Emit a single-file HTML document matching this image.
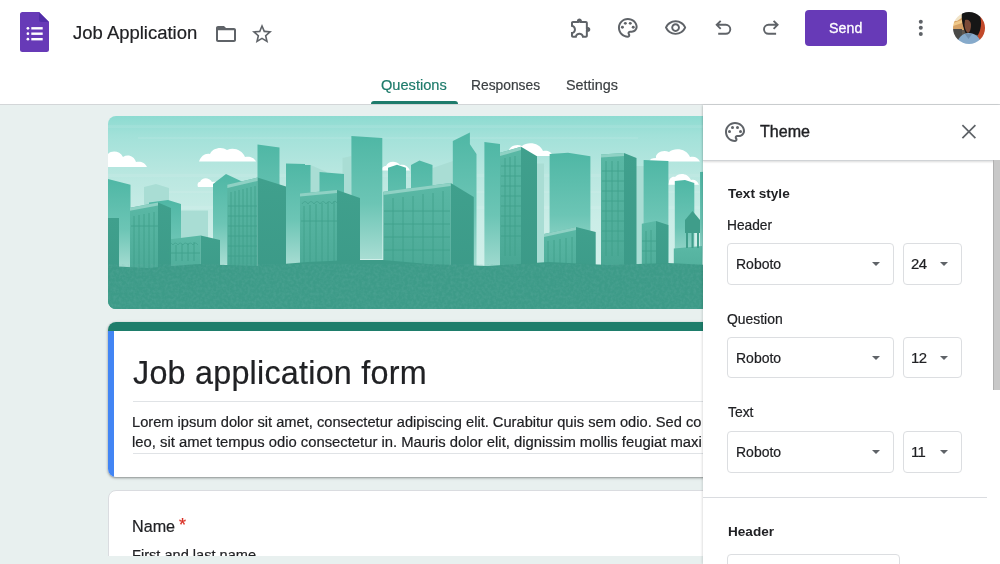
<!DOCTYPE html>
<html><head><meta charset="utf-8">
<style>
*{box-sizing:border-box;margin:0;padding:0}
html,body{width:1000px;height:564px;overflow:hidden;background:#e8f0ef;font-family:"Liberation Sans",sans-serif;color:#202124}
.a{position:absolute}
.t{position:absolute;white-space:nowrap;line-height:1;-webkit-text-stroke:0.2px currentColor;will-change:transform}
.ic{position:absolute;fill:#5f6368}
.dd{position:absolute;border:1px solid #dcdee1;border-radius:4px;background:#fff}
.arr{position:absolute;width:0;height:0;border-left:4px solid transparent;border-right:4px solid transparent;border-top:4px solid #5f6368}
</style></head>
<body>
<!-- top bar -->
<div class="a" style="left:0;top:0;width:1000px;height:105px;background:#fff;border-bottom:1px solid #d3d6d8"></div>
<svg class="a" style="left:20px;top:12px" width="29" height="40" viewBox="0 0 29 40">
  <path d="M2.5 0H19L29 10V37.5A2.5 2.5 0 0 1 26.5 40H2.5A2.5 2.5 0 0 1 0 37.5V2.5A2.5 2.5 0 0 1 2.5 0Z" fill="#673ab7"/>
  <path d="M19 0L29 10H21A2 2 0 0 1 19 8Z" fill="#512da8"/>
  <circle cx="7.9" cy="16.3" r="1.35" fill="#fff"/><circle cx="7.9" cy="21.7" r="1.35" fill="#fff"/><circle cx="7.9" cy="27.2" r="1.35" fill="#fff"/>
  <rect x="11.3" y="15.1" width="11.4" height="2.4" fill="#fff"/><rect x="11.3" y="20.5" width="11.4" height="2.4" fill="#fff"/><rect x="11.3" y="26" width="11.4" height="2.4" fill="#fff"/>
</svg>
<div class="t" style="left:72.8px;top:23.5px;font-size:18.48px;color:#202124">Job Application</div>
<!-- folder -->
<svg class="ic" style="left:214.2px;top:21.8px" width="24" height="24" viewBox="0 0 24 24"><path fill-rule="evenodd" d="M10 4H4c-1.1 0-1.99.9-1.99 2L2 18c0 1.1.9 2 2 2h16c1.1 0 2-.9 2-2V8c0-1.1-.9-2-2-2h-8l-2-2zM4 8.2h16v9.8H4z"/></svg>
<!-- star -->
<svg class="ic" style="left:250.2px;top:21.9px" width="24" height="24" viewBox="0 0 24 24"><path d="M22 9.24l-7.19-.62L12 2 9.19 8.63 2 9.24l5.46 4.73L5.82 21 12 17.27 18.18 21l-1.63-7.03L22 9.24zM12 15.4l-3.76 2.27 1-4.28-3.32-2.88 4.38-.38L12 6.1l1.71 4.04 4.38.38-3.32 2.88 1 4.28L12 15.4z"/></svg>
<!-- puzzle -->
<svg class="ic" style="left:568.6px;top:16.4px" width="23.8" height="23.8" viewBox="0 0 24 24"><path d="M10.5 4.5c.28 0 .5.22.5.5v2h6v6h2c.28 0 .5.22.5.5s-.22.5-.5.5h-2v6h-2.12c-.68-1.75-2.39-3-4.38-3s-3.7 1.25-4.38 3H4v-2.12c1.75-.68 3-2.39 3-4.38 0-1.99-1.24-3.7-2.99-4.38L4 7h6V5c0-.28.22-.5.5-.5m0-2C9.12 2.5 8 3.62 8 5H4c-1.1 0-1.99.9-1.99 2v3.8h.29c1.49 0 2.7 1.21 2.7 2.7s-1.21 2.7-2.7 2.7H2V20c0 1.1.9 2 2 2h3.8v-.3c0-1.49 1.21-2.7 2.7-2.7s2.7 1.21 2.7 2.7v.3H17c1.1 0 2-.9 2-2v-4c1.38 0 2.5-1.12 2.5-2.5S20.38 11 19 11V7c0-1.1-.9-2-2-2h-4c0-1.38-1.12-2.5-2.5-2.5z"/><circle cx="10.5" cy="4.9" r="2"/><circle cx="19.1" cy="13.5" r="2"/></svg>
<!-- palette -->
<svg class="ic" style="left:615.5px;top:15.9px" width="23.6" height="23.6" viewBox="0 0 24 24"><path d="M12 22C6.49 22 2 17.51 2 12S6.49 2 12 2s10 4.04 10 9c0 3.31-2.69 6-6 6h-1.77c-.28 0-.5.22-.5.5 0 .12.05.23.13.33.41.47.64 1.06.64 1.67 0 1.38-1.12 2.5-2.5 2.5zm0-18c-4.41 0-8 3.59-8 8s3.59 8 8 8c.28 0 .5-.22.5-.5 0-.16-.08-.28-.14-.35-.41-.46-.63-1.05-.63-1.65 0-1.38 1.12-2.5 2.5-2.5H16c2.21 0 4-1.79 4-4 0-3.86-3.59-7-8-7z"/><circle cx="6.5" cy="11.5" r="1.5"/><circle cx="9.5" cy="7.5" r="1.5"/><circle cx="14.5" cy="7.5" r="1.5"/><circle cx="17.5" cy="11.5" r="1.5"/></svg>
<!-- eye -->
<svg class="ic" style="left:663.6px;top:16px" width="23.2" height="23.2" viewBox="0 0 24 24"><path d="M12 6.5c3.79 0 7.17 2.13 8.82 5.5-1.65 3.37-5.02 5.5-8.82 5.5S4.83 15.37 3.18 12C4.83 8.63 8.21 6.5 12 6.5m0-2C7 4.5 2.73 7.61 1 12c1.73 4.39 6 7.5 11 7.5s9.27-3.11 11-7.5c-1.73-4.39-6-7.5-11-7.5zm0 5c1.38 0 2.5 1.12 2.5 2.5s-1.12 2.5-2.5 2.5-2.5-1.12-2.5-2.5 1.12-2.5 2.5-2.5m0-2c-2.48 0-4.5 2.02-4.5 4.5s2.02 4.5 4.5 4.5 4.5-2.02 4.5-4.5-2.02-4.5-4.5-4.5z"/></svg>
<!-- undo / redo -->
<svg class="a" style="left:0;top:0" width="1000" height="60"><g fill="none" stroke="#5f6368" stroke-width="1.9">
  <path d="M720.7 20.8L716.7 24.8L720.7 28.8M716.7 24.8H725.8A4.5 4.5 0 0 1 725.8 33.8H718.2"/>
  <path d="M763.0 20.8L767.0 24.8L763.0 28.8M767.0 24.8H757.9A4.5 4.5 0 0 0 757.9 33.8H765.5" transform="translate(10.6 0)"/>
  </g>
  <g fill="#5f6368"><circle cx="920.8" cy="21.7" r="2"/><circle cx="920.8" cy="27.8" r="2"/><circle cx="920.8" cy="33.9" r="2"/></g>
</svg>
<div class="a" style="left:805px;top:10px;width:82px;height:35.5px;background:#673ab7;border-radius:4px"></div>
<div class="t" style="left:829.4px;top:20.7px;font-size:14.2px;color:#fff;-webkit-text-stroke:0.3px #fff;letter-spacing:0.1px">Send</div>
<!-- avatar -->
<svg class="a" style="left:952.7px;top:11.7px" width="32" height="32" viewBox="0 0 32 32">
  <defs><clipPath id="av"><circle cx="16" cy="16" r="16"/></clipPath><filter id="bl" x="-10%" y="-10%" width="120%" height="120%"><feGaussianBlur stdDeviation=".55"/></filter></defs>
  <g clip-path="url(#av)"><g filter="url(#bl)">
    <rect x="-2" y="-2" width="36" height="36" fill="#5d5650"/>
    <rect x="-2" y="-2" width="13" height="20" fill="#d6a266"/>
    <path d="M-2 -2H10V5L4 9H-2Z" fill="#f1e3c6"/>
    <path d="M0 11L9 8V11L0 14Z" fill="#f0c98a"/>
    <rect x="-2" y="17" width="11" height="17" fill="#494846"/>
    <rect x="25" y="-2" width="9" height="36" fill="#c24a2c"/>
    <path d="M9 1C13 -2 23 -2 27 4C29 10 28 18 25 23L13 22C10 16 8 7 9 1Z" fill="#181414"/>
    <path d="M12 8C15 7 18 9 18 13C18 17 17 20 15 21C13 20 11.5 16 11.5 12Z" fill="#7b4c39"/>
    <path d="M3 33C5 26 9 21 15.5 21C22 21 27 25 29 33Z" fill="#86aacb"/>
    <path d="M12 22L15.5 27L19 22Z" fill="#6f8fae"/>
  </g></g>
</svg>
<!-- tabs -->
<div class="t" style="left:380.8px;top:77.9px;font-size:14.61px;color:#1e7b6b">Questions</div>
<div class="t" style="left:471.1px;top:78.6px;font-size:13.81px;color:#3c4043">Responses</div>
<div class="t" style="left:565.7px;top:78.1px;font-size:14.37px;color:#3c4043">Settings</div>
<div class="a" style="left:371px;top:100.5px;width:87px;height:3.5px;background:#1e7b6b;border-radius:3px 3px 0 0"></div>

<!-- banner -->
<div class="a" style="left:108px;top:116px;width:620px;height:193px;border-radius:8px;overflow:hidden">
<svg width="620" height="193" viewBox="0 0 620 193">
  <defs>
    <linearGradient id="sky" x1="0" y1="0" x2="0" y2="1"><stop offset="0" stop-color="#8ddbd1"/><stop offset=".1" stop-color="#a2e1d9"/><stop offset=".3" stop-color="#b9e7e0"/><stop offset=".55" stop-color="#cbede7"/><stop offset="1" stop-color="#d8f2ed"/></linearGradient>
    <linearGradient id="mid" x1="0" y1="0" x2="0" y2="1"><stop offset="0" stop-color="#4fb7a5"/><stop offset=".55" stop-color="#6cc5b5"/><stop offset="1" stop-color="#a8ddd3"/></linearGradient>
    <linearGradient id="front" x1="0" y1="0" x2="0" y2="1"><stop offset="0" stop-color="#5ab8a5"/><stop offset=".6" stop-color="#4dab98"/><stop offset="1" stop-color="#3f9d8a"/></linearGradient>
    <linearGradient id="side" x1="0" y1="0" x2="0" y2="1"><stop offset="0" stop-color="#40a08d"/><stop offset="1" stop-color="#3a9886"/></linearGradient>
  </defs>
  <rect width="620" height="193" fill="url(#sky)"/>
  <g fill="#fff" opacity=".08">
    <rect x="0" y="9" width="620" height="3"/><rect x="30" y="21" width="500" height="2"/><rect x="0" y="58" width="620" height="3"/><rect x="60" y="75" width="560" height="2"/><rect x="0" y="90" width="620" height="3"/>
  </g>
  <g fill="#fff">
    <path d="M0 51H39C37 46 32 45 28 46C26 40 20 38 15 41C12 35 4 34 0 38Z"/>
    <path d="M91 45.6H148C146 41 141 40 137 41C134 34 126 31 119 34C114 30 104 32 102 38C97 37 93 40 91 45.6Z"/>
    <path d="M90 71H114C112 66 108 65 104 66C101 61 94 61 92 66C90 66 89 68 90 71Z"/>
    <path d="M273 54.5H302C300 50 296 48 292 49C288 44 280 45 278 50C276 50 273 52 273 54.5Z"/>
    <path d="M397 40H445C443 35 439 34 435 35C432 27 420 25 414 30C408 27 400 31 401 36C398 36 397 38 397 40Z"/>
    <path d="M541 45.6H592C590 41 586 40 582 41C579 33 567 31 561 36C555 33 547 37 548 42C544 42 542 43 541 45.6Z"/>
    <path d="M560 68.7H591C589 64 586 63 583 64C580 57 571 56 567 61C564 60 561 63 561 66Z"/>
  </g>
  <!-- pale back buildings -->
  <g fill="#a9ddd4">
    <path d="M36 71L48 68L61 72V150H36Z"/>
    <path d="M73 94.6H100V150H73Z"/>
    <path d="M202.6 49L218.6 56V150H202.6Z"/>
    <path d="M234.5 42L243.4 40V150H234.5Z"/>
    <path d="M324.5 52L345 45V150H324.5Z"/>
    <path d="M425.7 47.4H436V150H425.7Z"/>
    <path d="M528 50H540V150H528Z"/>
    <path d="M380 96L392 90V150H380Z"/>
  </g>
  <!-- mid buildings -->
  <g fill="url(#mid)">
    <path d="M0 63L22.5 68.7V154H0Z"/>
    <path d="M41 86.4L60 84L73 88V160H41Z"/>
    <path d="M105 68L118 58L135 66V148.5H105Z"/>
    <path d="M149.5 28.6L171.5 31.5V150H149.5Z"/>
    <path d="M178 47.4L197 48V150H178Z"/>
    <path d="M192 49H202.6V150H192Z"/>
    <path d="M211.5 56L236 58V150H211.5Z"/>
    <path d="M243.4 20L274.3 22V143H243.4Z"/>
    <path d="M280 51.8L289 48.8L298 51.8V150H280Z"/>
    <path d="M303 49L311.5 44.6L324.5 49V150H303Z"/>
    <path d="M344.8 25L361.9 16.4V28.2L368.5 38V155.6H344.8Z"/>
    <path d="M376.4 26L392 28V160H376.4Z"/>
    <path d="M441.6 38L460 36.8L482.4 40.3V150H441.6Z"/>
    <path d="M535.6 43.9L560.4 45V150H535.6Z"/>
    <path d="M566.8 65L577 64L586.3 67V150H566.8Z"/>
    <path d="M592 56L620 54V150H592Z"/>
  </g>
  <!-- front buildings -->
  <g fill="url(#front)">
    <path d="M22 91.7L50 86.4V193H22Z"/>
    <path d="M58 123.7L92.7 119.4V193H58Z"/>
    <path d="M119.3 68.7L149.5 61.6V193H119.3Z"/>
    <path d="M192 77.6L229 74V193H192Z"/>
    <path d="M275.3 75.8L342.7 67V193H275.3Z"/>
    <path d="M392 36.8L413 30.8V193H392Z"/>
    <path d="M436 118L468 111V193H436Z"/>
    <path d="M493 38.6L516 37V193H493Z"/>
    <path d="M533.8 107.7L548 105V193H533.8Z"/>
    <path d="M565.8 132.5L594 130V193H565.8Z"/>
  </g>
  <g fill="url(#side)">
    <path d="M0 102H11V193H0Z"/>
    <path d="M50 86.4L63 92V193H50Z"/>
    <path d="M92.7 119.4L112 124V193H92.7Z"/>
    <path d="M149.5 61.6L178 70.5V193H149.5Z"/>
    <path d="M229 74L252 82V193H229Z"/>
    <path d="M342.7 67L365.8 81V193H342.7Z"/>
    <path d="M413 30.8L429 40.3V193H413Z"/>
    <path d="M468 111L487.7 116V193H468Z"/>
    <path d="M516 37L528.5 42V193H516Z"/>
    <path d="M548 105L560.4 109V193H548Z"/>
  </g>
  <!-- roof caps -->
  <g fill="#8fd1c4">
    <path d="M119.3 68.7L149.5 61.6V65L119.3 72Z"/>
    <path d="M275.3 75.8L342.7 67V70L275.3 79Z"/>
    <path d="M392 36.8L413 30.8V34L392 40Z"/>
    <path d="M493 38.6L516 37V40L493 41.6Z"/>
    <path d="M436 118L468 111V114L436 121Z"/>
    <path d="M22 91.7L50 86.4V89.5L22 94.8Z"/>
    <path d="M192 77.6L229 74V77L192 80.6Z"/>
  </g>
  <!-- window grids -->
  <g stroke="#3f9e8b" stroke-width=".9" fill="none" opacity=".9">
    <path d="M123 76V160M127 75V160M131 74V160M135 73V160M139 72V160M143 71V160M147 70V160M120 90H149M120 100H149M120 110H149M120 120H149M120 130H149M120 140H149"/>
    <path d="M285 82V150M295 81V150M305 80V150M315 78V150M325 77V150M335 75V150M276 95H342M276 108H342M276 121H342M276 134H342"/>
    <path d="M397 42V140M402 41V140M407 40V140M393 50H413M393 60H413M393 70H413M393 80H413M393 90H413M393 100H413M393 110H413M393 120H413"/>
    <path d="M498 45V140M504 45V140M510 45V140M494 55H516M494 65H516M494 75H516M494 85H516M494 95H516M494 105H516M494 115H516M494 125H516"/>
    <path d="M26 100V160M31 99V160M36 98V160M41 97V160M46 96V160M23 110H50"/>
    <path d="M196 90V150M202 89V150M208 88V150M214 87V150M220 86V150M226 85V150M193 105H229"/>
    <path d="M440 125V160M446 124V160M452 123V160M458 122V160M464 121V160"/>
    <path d="M62 130V145M68 129V145M74 128V145M80 127V145M86 126V145M59 137H92"/>
    <path d="M538 115V150M543 114V150M534 125H548M534 135H548"/>
  </g>
  <!-- arches -->
  <g stroke="#3f9e8b" stroke-width=".9" fill="none" opacity=".7">
    <path d="M194 88Q197 83 200 88Q203 83 206 88Q209 83 212 88Q215 83 218 88Q221 83 224 88Q227 83 229 87"/>
    <path d="M60 129Q62 125 65 129Q67 125 70 129Q72 125 75 129Q77 125 80 129Q82 125 85 129Q87 125 90 129"/>
  </g>
  <!-- grain -->
  <filter id="grain" x="0" y="0" width="100%" height="100%"><feTurbulence type="fractalNoise" baseFrequency=".35" numOctaves="2" seed="3"/><feColorMatrix values="0 0 0 0 0.15  0 0 0 0 0.45  0 0 0 0 0.4  0 0 0 -1.6 1.05"/></filter>
  
  <!-- water tower -->
  <g fill="#3f9d8a"><path d="M577 104L584.5 95L592 104V117H577Z"/><path d="M578 117H580V132H578ZM589 117H591V132H589ZM583.5 117H585.5V132H583.5Z"/></g>
  <!-- ground -->
  <path d="M0 150L40 152L90 148L150 150L200 146L243 144L275 144L320 148L380 150L440 146L500 149L560 147L620 150V193H0Z" fill="#3d9b88"/>
  <rect x="0" y="148" width="620" height="45" filter="url(#grain)" opacity=".3"/>
  
</svg>
</div>

<!-- title card -->
<div class="a" style="left:108px;top:322px;width:620px;height:155px;background:#fff;border-radius:8px;overflow:hidden;box-shadow:0 1px 2px rgba(0,0,0,.3),0 1px 3px 1px rgba(0,0,0,.1)">
  <div class="a" style="left:0;top:0;width:620px;height:9px;background:#1e7d6b"></div>
  <div class="a" style="left:0;top:9px;width:6px;height:146px;background:#4285f4"></div>
</div>
<div class="t" style="left:132.6px;top:357.2px;font-size:32.3px;letter-spacing:0.24px;color:#202124">Job application form</div>
<div class="a" style="left:133px;top:400.5px;width:600px;height:1px;background:#e0e3e6"></div>
<div class="t" style="left:131.8px;top:414.9px;font-size:14.67px;color:#202124">Lorem ipsum dolor sit amet, consectetur adipiscing elit. Curabitur quis sem odio. Sed co</div>
<div class="t" style="left:132px;top:434.8px;font-size:14.82px;color:#202124">leo, sit amet tempus odio consectetur in. Mauris dolor elit, dignissim mollis feugiat maxi</div>
<div class="a" style="left:133px;top:452.5px;width:600px;height:1px;background:#e0e3e6"></div>

<!-- name card -->
<div class="a" style="left:108px;top:490px;width:620px;height:100px;background:#fff;border-radius:8px;border:1px solid #dadce0"></div>
<div class="t" style="left:132.1px;top:516.7px;font-size:16.15px;color:#202124">Name <span style="color:#d93025;font-size:18px;position:relative;top:-1.2px;left:-0.6px">*</span></div>
<div class="t" style="left:132.2px;top:547.7px;font-size:14.6px;color:#202124">First and last name</div>
<div class="a" style="left:0;top:556px;width:703px;height:8px;background:#e8f0ef"></div>

<!-- side panel -->
<div class="a" style="left:703px;top:105px;width:297px;height:459px;background:#fff;box-shadow:-1px 0 2px rgba(0,0,0,.12)"></div>
<div class="a" style="left:703px;top:105px;width:297px;height:55.5px;background:#fff;border-bottom:1px solid #d0d3d6;box-shadow:0 1px 2px rgba(0,0,0,.15)"></div>
<svg class="ic" style="left:722.9px;top:120.2px" width="24" height="24" viewBox="0 0 24 24"><path d="M12 22C6.49 22 2 17.510 2 12S6.49 2 12 2s10 4.04 10 9c0 3.31-2.69 6-6 6h-1.77c-.28 0-.5.22-.5.5 0 .12.05.23.13.33.41.47.64 1.06.64 1.67 0 1.38-1.12 2.5-2.5 2.5zm0-18c-4.41 0-8 3.59-8 8s3.59 8 8 8c.28 0 .5-.22.5-.5 0-.16-.08-.28-.14-.35-.41-.46-.63-1.05-.63-1.65 0-1.38 1.12-2.5 2.5-2.5H16c2.21 0 4-1.79 4-4 0-3.86-3.59-7-8-7z"/><circle cx="6.5" cy="11.5" r="1.5"/><circle cx="9.5" cy="7.5" r="1.5"/><circle cx="14.5" cy="7.5" r="1.5"/><circle cx="17.5" cy="11.5" r="1.5"/></svg>
<div class="t" style="left:759.7px;top:123.3px;font-size:16.06px;color:#202124;-webkit-text-stroke:0.38px #202124">Theme</div>
<svg class="a" style="left:950px;top:110px" width="40" height="40"><path d="M12.4 15.2L25.4 28.2M25.4 15.2L12.4 28.2" stroke="#5f6368" stroke-width="1.7" fill="none"/></svg>

<div class="t" style="left:727.5px;top:186.5px;font-size:13.6px;font-weight:bold;color:#202124;-webkit-text-stroke:0">Text style</div>
<div class="t" style="left:726.7px;top:219.2px;font-size:13.72px;color:#202124">Header</div>
<div class="dd" style="left:727.3px;top:243.4px;width:167.2px;height:41.3px"></div>
<div class="t" style="left:735.9px;top:257.2px;font-size:14px">Roboto</div>
<div class="arr" style="left:871.9px;top:262px"></div>
<div class="dd" style="left:903.3px;top:243.4px;width:59.2px;height:41.3px"></div>
<div class="t" style="left:911.4px;top:257.1px;font-size:14.9px;letter-spacing:-0.6px">24</div>
<div class="arr" style="left:939.8px;top:262px"></div>

<div class="t" style="left:727.2px;top:313.1px;font-size:13.92px;color:#202124">Question</div>
<div class="dd" style="left:727.3px;top:337.2px;width:167.2px;height:41.3px"></div>
<div class="t" style="left:735.9px;top:351.2px;font-size:14px">Roboto</div>
<div class="arr" style="left:871.9px;top:356px"></div>
<div class="dd" style="left:903.3px;top:337.2px;width:59.2px;height:41.3px"></div>
<div class="t" style="left:911.4px;top:351px;font-size:14.9px;letter-spacing:-0.6px">12</div>
<div class="arr" style="left:939.8px;top:356px"></div>

<div class="t" style="left:727.9px;top:406.2px;font-size:13.9px;color:#202124">Text</div>
<div class="dd" style="left:727.3px;top:431.4px;width:167.2px;height:41.3px"></div>
<div class="t" style="left:735.9px;top:445.2px;font-size:14px">Roboto</div>
<div class="arr" style="left:871.9px;top:450px"></div>
<div class="dd" style="left:903.3px;top:431.4px;width:59.2px;height:41.3px"></div>
<div class="t" style="left:911.4px;top:445px;font-size:14.9px;letter-spacing:-0.6px">11</div>
<div class="arr" style="left:939.8px;top:450px"></div>

<div class="a" style="left:703px;top:497px;width:284px;height:1px;background:#dadce0"></div>
<div class="t" style="left:727.5px;top:524.5px;font-size:13.57px;font-weight:bold;color:#202124;-webkit-text-stroke:0">Header</div>
<div class="dd" style="left:727.3px;top:553.5px;width:172.4px;height:41.3px"></div>
<div class="a" style="left:993px;top:160px;width:7px;height:230px;background:#c8c8c8;border-left:1px solid #b0b0b0"></div>
</body></html>
